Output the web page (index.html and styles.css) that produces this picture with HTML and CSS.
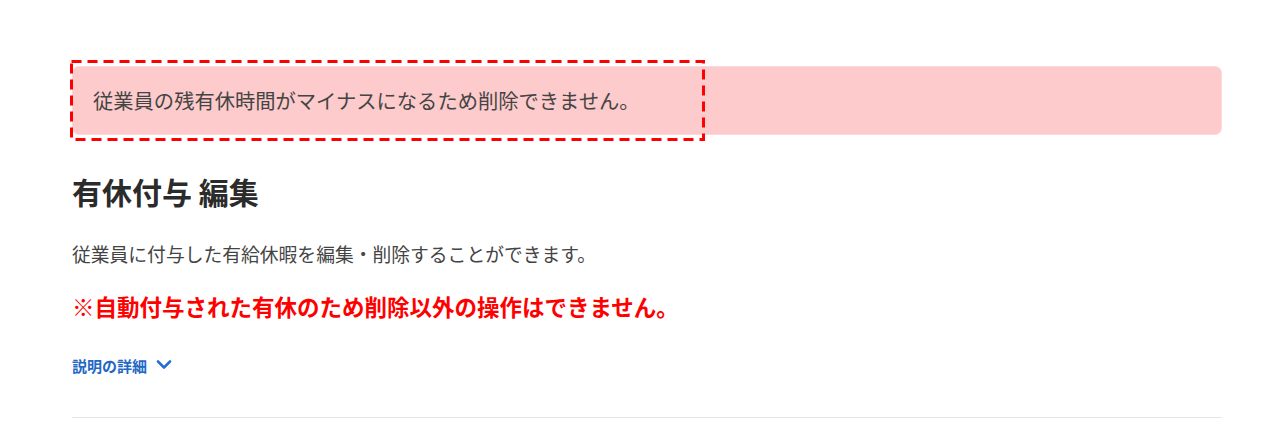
FILE: index.html
```html
<!DOCTYPE html>
<html lang="ja">
<head>
<meta charset="utf-8">
<title>有休付与 編集</title>
<link rel="stylesheet" href="styles.css">
</head>
<body>
<main class="page">
  <div class="alert">
    <p class="alert-text">従業員の残有休時間がマイナスになるため削除できません。</p>
    <svg class="highlight" width="635" height="81" viewBox="0 0 635 81" aria-hidden="true"><rect x="1.5" y="1.5" width="632" height="78" fill="none" stroke="#ff0000" stroke-width="3" stroke-dasharray="10 6"/></svg>
  </div>
  <h1 class="title">有休付与 編集</h1>
  <p class="desc">従業員に付与した有給休暇を編集・削除することができます。</p>
  <p class="warning">※自動付与された有休のため削除以外の操作はできません。</p>
  <a class="details" href="#">説明の詳細
    <svg class="chevron" width="16" height="11" viewBox="0 0 16 11" aria-hidden="true"><path d="M2 2.5 L8 8.5 L14 2.5" fill="none" stroke="#2a6fd0" stroke-width="2.6" stroke-linecap="round" stroke-linejoin="round"/></svg>
  </a>
  <hr class="divider">
</main>
</body>
</html>
```

FILE: styles.css
```css
* { box-sizing: border-box; }
html, body { margin: 0; padding: 0; background: #fff; }
body {
  font-family: "Noto Sans CJK JP", "Noto Sans", sans-serif;
  color: #333;
}
.page {
  width: 1150px;
  margin-left: 72px;
  padding-top: 66px;
}
.alert {
  position: relative;
  background: #fdcbcb;
  border: 1px solid #fbd9da;
  border-radius: 7px;
  padding: 21px 20px;
}
.alert-text {
  margin: 0;
  font-size: 20.3px;
  line-height: 25px;
  color: #444;
}
.highlight {
  position: absolute;
  left: -3px;
  top: -7px;
  display: block;
  pointer-events: none;
}
.title {
  margin: 35px 0 0;
  font-size: 30px;
  line-height: 42px;
  font-weight: 700;
  color: #2b2b2b;
}
.desc {
  margin: 28px 0 0;
  font-size: 18.8px;
  line-height: 27px;
  color: #444;
}
.warning {
  margin: 23px 0 0;
  font-size: 22.5px;
  line-height: 32px;
  font-weight: 700;
  color: #ff0000;
}
.details {
  display: inline-flex;
  align-items: center;
  gap: 9px;
  margin-top: 34px;
  font-size: 15px;
  line-height: 20px;
  font-weight: 700;
  color: #1f68c4;
  text-decoration: none;
}
.chevron { display: block; margin-top: -3px; }
.divider {
  margin: 40px 0 0;
  border: 0;
  border-top: 1px solid #e6e6e6;
  height: 0;
}
```
